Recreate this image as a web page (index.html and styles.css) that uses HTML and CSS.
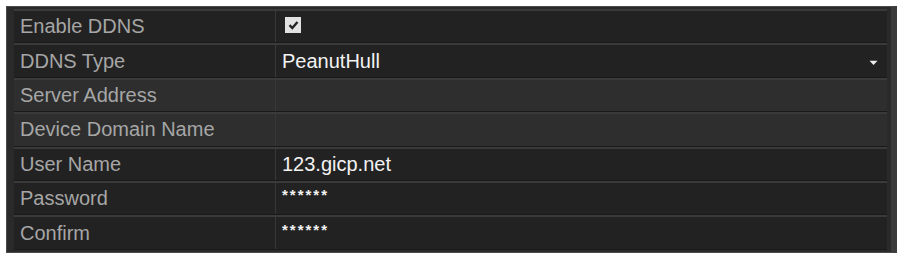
FILE: index.html
```html
<!DOCTYPE html>
<html>
<head>
<meta charset="utf-8">
<link rel="stylesheet" href="styles.css">
</head>
<body>
<div class="panel">
  <div class="row">
    <div class="label">Enable DDNS</div>
    <div class="value"><span class="check"><svg width="11" height="10" viewBox="0 0 11 10"><path d="M1.5 5.2 L4.3 8 L9.5 2" fill="none" stroke="#222" stroke-width="2.4"/></svg></span></div>
  </div>
  <div class="row">
    <div class="label">DDNS Type</div>
    <div class="value select">PeanutHull<svg class="arrow" width="9" height="6" viewBox="0 0 9 6"><path d="M0.5 0.8 L4.5 5 L8.5 0.8 Z" fill="#eee"/></svg></div>
  </div>
  <div class="row disabled">
    <div class="label">Server Address</div>
    <div class="value"></div>
  </div>
  <div class="row disabled">
    <div class="label">Device Domain Name</div>
    <div class="value"></div>
  </div>
  <div class="row">
    <div class="label">User Name</div>
    <div class="value">123.gicp.net</div>
  </div>
  <div class="row">
    <div class="label">Password</div>
    <div class="value"><span class="pw">******</span></div>
  </div>
  <div class="row">
    <div class="label">Confirm</div>
    <div class="value"><span class="pw">******</span></div>
  </div>
</div>
</body>
</html>
```
FILE: styles.css
```css
html, body {
  margin: 0;
  padding: 0;
  background: #ffffff;
}
body {
  font-family: "Liberation Sans", Arial, sans-serif;
  padding: 6px 4px 0 6px;
}
.panel {
  width: 873px;
  background: #2a2a2a;
  border: 1px solid #4a4a4a;
  border-right: 6px solid #3b3b3b;
  padding: 2px 4px 2px 7px;
  display: flex;
  flex-direction: column;
}
.row {
  display: grid;
  grid-template-columns: 262px 1fr;
  height: 34.4px;
  box-sizing: border-box;
  background: #222222;
  border-top: 2px solid #3a3a3a;
  border-bottom: 1px solid #1a1a1a;
}
.row.disabled {
  background: #2e2e2e;
}
.label {
  color: #a6a6a6;
  font-size: 20px;
  padding-left: 6px;
  display: flex;
  align-items: center;
  border-right: 1px solid #383838;
}
.value {
  color: #f2f2f2;
  font-size: 20px;
  padding-left: 6px;
  display: flex;
  align-items: center;
}
.select {
  justify-content: space-between;
  padding-right: 9px;
}
.arrow {
  margin-top: 3px;
}
.check {
  width: 16px;
  height: 16px;
  margin-left: 3px;
  background: #e2e2e2;
  display: flex;
  align-items: center;
  justify-content: center;
  margin-top: -4px;
}
.pw {
  font-size: 15px;
  font-weight: bold;
  letter-spacing: 2px;
  margin-top: -8px;
}
```
